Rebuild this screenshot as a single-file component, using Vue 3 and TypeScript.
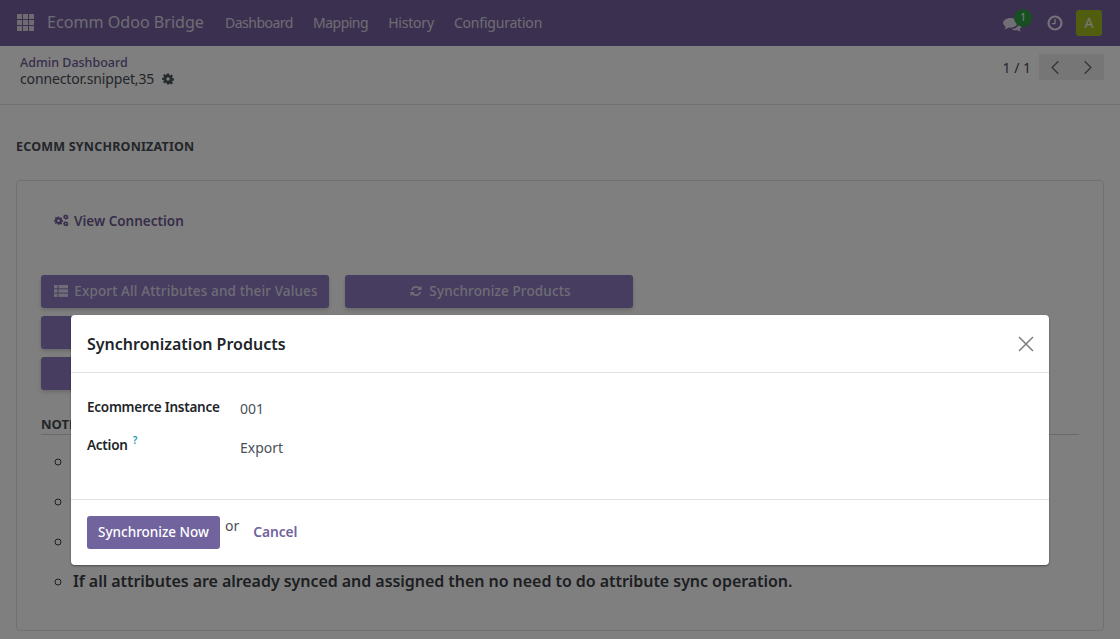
<script setup lang="ts">
const navItems: string[] = ['Dashboard', 'Mapping', 'History', 'Configuration']
const gearPath = 'M12 8.6a3.4 3.4 0 1 0 0 6.8 3.4 3.4 0 0 0 0-6.8zM10 1h4l.6 3.1 1.9.8 2.6-1.8 2.8 2.8-1.8 2.6.8 1.9 3.1.6v4l-3.1.6-.8 1.9 1.8 2.6-2.8 2.8-2.6-1.8-1.9.8L14 23h-4l-.6-3.1-1.9-.8-2.6 1.8-2.8-2.8 1.8-2.6-.8-1.9L0 14v-4l3.1-.6.8-1.9L2.1 4.9l2.8-2.8 2.6 1.8 1.9-.8z'
</script>

<template>
  <div class="page">
    <header class="navbar">
      <svg class="apps" viewBox="0 0 17 17" aria-hidden="true">
        <g fill="currentColor">
          <rect x="0" y="0" width="5" height="5" /><rect x="6" y="0" width="5" height="5" /><rect x="12" y="0" width="5" height="5" />
          <rect x="0" y="6" width="5" height="5" /><rect x="6" y="6" width="5" height="5" /><rect x="12" y="6" width="5" height="5" />
          <rect x="0" y="12" width="5" height="5" /><rect x="6" y="12" width="5" height="5" /><rect x="12" y="12" width="5" height="5" />
        </g>
      </svg>
      <span class="brand">Ecomm Odoo Bridge</span>
      <nav class="menu">
        <a v-for="item in navItems" :key="item" class="menu-item">{{ item }}</a>
      </nav>
      <div class="systray">
        <span class="chat">
          <svg class="chat-icon" viewBox="0 0 20 17" aria-hidden="true">
            <path fill="currentColor" d="M8 1c4 0 7 2.300 7 5.200s-3 5.200-7 5.200c-.8 0-1.500-.1-2.200-.3C4.500 12.200 3 12.800 1.300 13c.8-.9 1.400-1.900 1.500-2.900C1.100 9.100 0 7.700 0 6.200 0 3.300 3.600 1 8 1z" />
            <path fill="currentColor" d="M16.400 5.200c2 .9 3.400 2.400 3.400 4.100 0 1.400-.9 2.600-2.300 3.500.1.900.7 1.800 1.400 2.600-1.500-.2-2.800-.7-3.900-1.600-.6.100-1.200.2-1.800.2-1.700 0-3.200-.5-4.300-1.300 4.400-.1 7.800-2.600 7.800-6 0-.9-.1-1.700-.3-2.500z" />
          </svg>
          <span class="badge">1</span>
        </span>
        <svg class="clock" viewBox="0 0 16 16" aria-hidden="true">
          <circle cx="8" cy="8" r="6.500" fill="none" stroke="currentColor" stroke-width="2.200" />
          <path d="M8 4v4.600H4.800" fill="none" stroke="currentColor" stroke-width="1.400" />
        </svg>
        <span class="avatar">A</span>
      </div>
    </header>

    <section class="control">
      <div class="crumbs">
        <a class="crumb-link">Admin Dashboard</a>
        <div class="record">
          <span>connector.snippet,35</span>
          <svg class="gear" viewBox="0 0 24 24" aria-hidden="true"><path fill="currentColor" fill-rule="evenodd" :d="gearPath" /></svg>
        </div>
      </div>
      <div class="pager">
        <span class="pager-count">1 / 1</span>
        <div class="pager-btns">
          <span class="pager-btn"><svg viewBox="0 0 12 18" aria-hidden="true"><path d="M10 1.500 2.500 9l7.500 7.500" fill="none" stroke="currentColor" stroke-width="1.500" /></svg></span>
          <span class="pager-btn"><svg viewBox="0 0 12 18" aria-hidden="true"><path d="M2 1.500 9.500 9 2 16.500" fill="none" stroke="currentColor" stroke-width="1.500" /></svg></span>
        </div>
      </div>
    </section>

    <main class="content">
      <h2 class="title">ECOMM SYNCHRONIZATION</h2>
      <div class="card">
        <a class="view-link">
          <svg class="cogs" viewBox="0 0 24 20" aria-hidden="true">
            <g fill="currentColor" fill-rule="evenodd">
              <path transform="translate(0 3) scale(.6)" :d="gearPath" />
              <path transform="translate(14.500 0) scale(.36)" :d="gearPath" />
              <path transform="translate(14.500 11) scale(.36)" :d="gearPath" />
            </g>
          </svg>
          View Connection
        </a>
        <div class="actions">
          <button class="action" type="button">
            <svg class="btn-icon" viewBox="0 0 14 12" aria-hidden="true">
              <g fill="currentColor">
                <rect x="0" y="0" width="3.500" height="3.300" /><rect x="4.500" y="0" width="9.500" height="3.300" />
                <rect x="0" y="4.300" width="3.500" height="3.300" /><rect x="4.500" y="4.300" width="9.500" height="3.300" />
                <rect x="0" y="8.600" width="3.500" height="3.300" /><rect x="4.500" y="8.600" width="9.500" height="3.300" />
              </g>
            </svg>
            Export All Attributes and their Values
          </button>
          <button class="action" type="button">
            <svg class="btn-icon" viewBox="0 0 14 14" aria-hidden="true">
              <path fill="none" stroke="currentColor" stroke-width="2" d="M2 5.800A5.200 5.200 0 0 1 11 4M12 8.200A5.200 5.200 0 0 1 3 10" />
              <path fill="currentColor" d="M13.500 .8v5h-5zM.5 13.200v-5h5z" />
            </svg>
            Synchronize Products
          </button>
          <button class="action" type="button" aria-label="Hidden action"></button>
          <span></span>
          <button class="action" type="button" aria-label="Hidden action"></button>
        </div>
        <h3 class="note">NOTE</h3>
        <ul class="notes">
          <li></li>
          <li></li>
          <li></li>
          <li>If all attributes are already synced and assigned then no need to do attribute sync operation.</li>
        </ul>
      </div>
    </main>

    <div class="backdrop"></div>

    <div class="modal" role="dialog">
      <header class="modal-head">
        <h4 class="modal-title">Synchronization Products</h4>
        <svg class="close" viewBox="0 0 16 16" aria-hidden="true"><path d="M1 1l14 14M15 1 1 15" fill="none" stroke="currentColor" stroke-width="1.500" /></svg>
      </header>
      <div class="modal-body">
        <div class="field">
          <span class="label">Ecommerce Instance</span>
          <span class="value">001</span>
        </div>
        <div class="field">
          <span class="label action-label">Action <sup class="help">?</sup></span>
          <span class="value">Export</span>
        </div>
      </div>
      <footer class="modal-foot">
        <button class="primary" type="button">Synchronize Now</button>
        <span class="or">or</span>
        <a class="cancel">Cancel</a>
      </footer>
    </div>
  </div>
</template>

<style>
html, body { margin: 0; background: #fff; }
</style>

<style scoped>
.page {
  position: relative;
  width: 1120px;
  height: 639px;
  overflow: hidden;
  font-family: "Noto Sans", "Open Sans", sans-serif;
  font-size: 14px;
  color: #464c54;
  background: #fff;
}
.navbar {
  display: flex;
  align-items: center;
  height: 46px;
  padding: 0 18px 2px 17px;
  box-sizing: border-box;
  background: #76609f;
  color: #fff;
}
.apps { width: 17px; height: 17px; opacity: .75; }
.brand { margin-left: 13px; font-size: 16.100px; opacity: .75; width: 178px; white-space: nowrap; }
.menu { display: flex; gap: 20px; }
.menu-item { font-size: 14px; opacity: .75; letter-spacing: -.5px; }
.menu-item:nth-child(n+3) { letter-spacing: -.2px; }
.systray { margin-left: auto; display: flex; align-items: center; margin-top: 2px; }
.chat { position: relative; display: block; width: 20px; height: 17px; margin-right: 24px; }
.chat-icon { display: block; width: 19px; height: 16px; opacity: .8; margin-top: 2px; }
.badge {
  position: absolute; left: 11px; top: -6px;
  width: 18px; height: 18px; border-radius: 50%;
  background: #2f9e44; color: #fff; font-size: 10px; line-height: 16px; text-align: center;
}
.clock { width: 16px; height: 16px; margin-right: 13px; color: #e8e4f0; }
.avatar {
  display: block; width: 26px; height: 26px; border-radius: 3px;
  background: #a8c814; color: #fff; font-size: 14px; line-height: 26px; text-align: center; opacity: .9;
}
.control {
  display: flex;
  justify-content: space-between;
  height: 59px;
  padding: 8px 16px 0 20px;
  box-sizing: border-box;
  border-bottom: 1px solid #dee2e6;
  background: #fff;
}
.crumb-link { display: block; color: #6f5b96; font-size: 12.500px; line-height: 17px; font-weight: 500; }
.record { display: flex; align-items: center; gap: 8px; font-size: 14px; line-height: 16px; letter-spacing: -.13px; }
.gear { width: 12px; height: 12px; color: #4a555a; }
.pager { display: flex; align-items: center; gap: 8px; height: 26px; }
.pager-count { font-size: 14px; }
.pager-btns { display: flex; background: #ececec; height: 26px; }
.pager-btn { display: flex; align-items: center; justify-content: center; width: 32.500px; color: #666; }
.pager-btn svg { width: 10px; height: 15px; }
.content { padding: 0 16px; }
.title {
  margin: 33px 0 0;
  font-size: 12.500px;
  line-height: 17px;
  font-weight: 700;
  letter-spacing: .2px;
}
.card {
  margin-top: 25px;
  height: 451px;
  box-sizing: border-box;
  border: 1px solid #dfe2e6;
  border-radius: 4px;
  padding: 0 24px;
}
.view-link {
  display: flex; align-items: center; gap: 5px;
  margin: 31px 0 0 13px;
  height: 17px;
  color: #6f5b96;
  font-weight: 600;
  font-size: 13.500px;
}
.cogs { width: 15px; height: 13px; }
.actions {
  display: grid;
  grid-template-columns: 288px 288px;
  grid-auto-rows: 33px;
  column-gap: 16px;
  row-gap: 8px;
  margin-top: 46px;
}
.action {
  display: flex; align-items: center; justify-content: center; gap: 6px;
  border: 0; border-radius: 3px; padding: 0 0 2px 2px;
  background: #8e7ac0;
  color: rgba(255,255,255,.72);
  font: inherit;
  font-weight: 500;
  font-size: 13.500px;
  letter-spacing: .13px;
  box-shadow: 0 2px 4px rgba(0,0,0,.18);
  white-space: nowrap;
}
.btn-icon { width: 14px; height: 12px; }
.note {
  margin: 25px 0 0;
  padding-bottom: 1px;
  font-size: 13px; line-height: 18px; font-weight: 700;
  border-bottom: 1px solid #ced4da;
  width: 1038px;
}
.notes { margin: 6px 0 0; padding: 0 0 0 32px; list-style: circle; font-size: 16px; font-weight: 600; color: #3a3f46; }
.notes li { height: 40px; line-height: 40px; white-space: nowrap; letter-spacing: -.05px; }
.backdrop { position: absolute; inset: 0; background: rgba(0,0,0,.5); }
.modal {
  position: absolute;
  left: 71px; top: 315px;
  width: 978px; height: 250px;
  background: #fff;
  border-radius: 4px;
  display: flex; flex-direction: column;
  box-shadow: 0 1px 2px rgba(0,0,0,.4);
}
.modal-head {
  display: flex; align-items: center; justify-content: space-between;
  height: 58px; box-sizing: border-box;
  padding: 0 15px 0 16px;
  border-bottom: 1px solid #dee2e6;
}
.modal-title { margin: 0; font-size: 16px; font-weight: 600; color: #212529; }
.close { width: 16px; height: 16px; color: #7d7d7d; }
.modal-body { flex: 1; padding: 14px 16px 0; }
.field { display: flex; height: 39px; align-items: center; }
.label { width: 153px; font-weight: 600; font-size: 13.500px; color: #212529; letter-spacing: -.25px; }
.action-label { margin-top: -2px; }
.value { font-size: 14px; color: #495057; padding-top: 4px; }
.help { color: #1c9cb8; font-size: 10px; line-height: 0; margin-left: 2px; }
.modal-foot {
  display: flex; align-items: flex-start;
  height: 66px; box-sizing: border-box;
  padding: 16px 16px 0;
  border-top: 1px solid #dee2e6;
}
.primary {
  width: 133px; height: 33px;
  border: 0; border-radius: 3px; padding: 0 0 2px;
  background: #71639e; color: #fff;
  font: inherit; font-weight: 500; font-size: 13.500px;
  white-space: nowrap;
}
.or { margin-left: 5px; font-size: 14px; color: #495057; line-height: 20px; }
.cancel { margin-left: 14px; color: #71639e; font-weight: 600; line-height: 31px; font-size: 13.800px; letter-spacing: -.1px; }
</style>
